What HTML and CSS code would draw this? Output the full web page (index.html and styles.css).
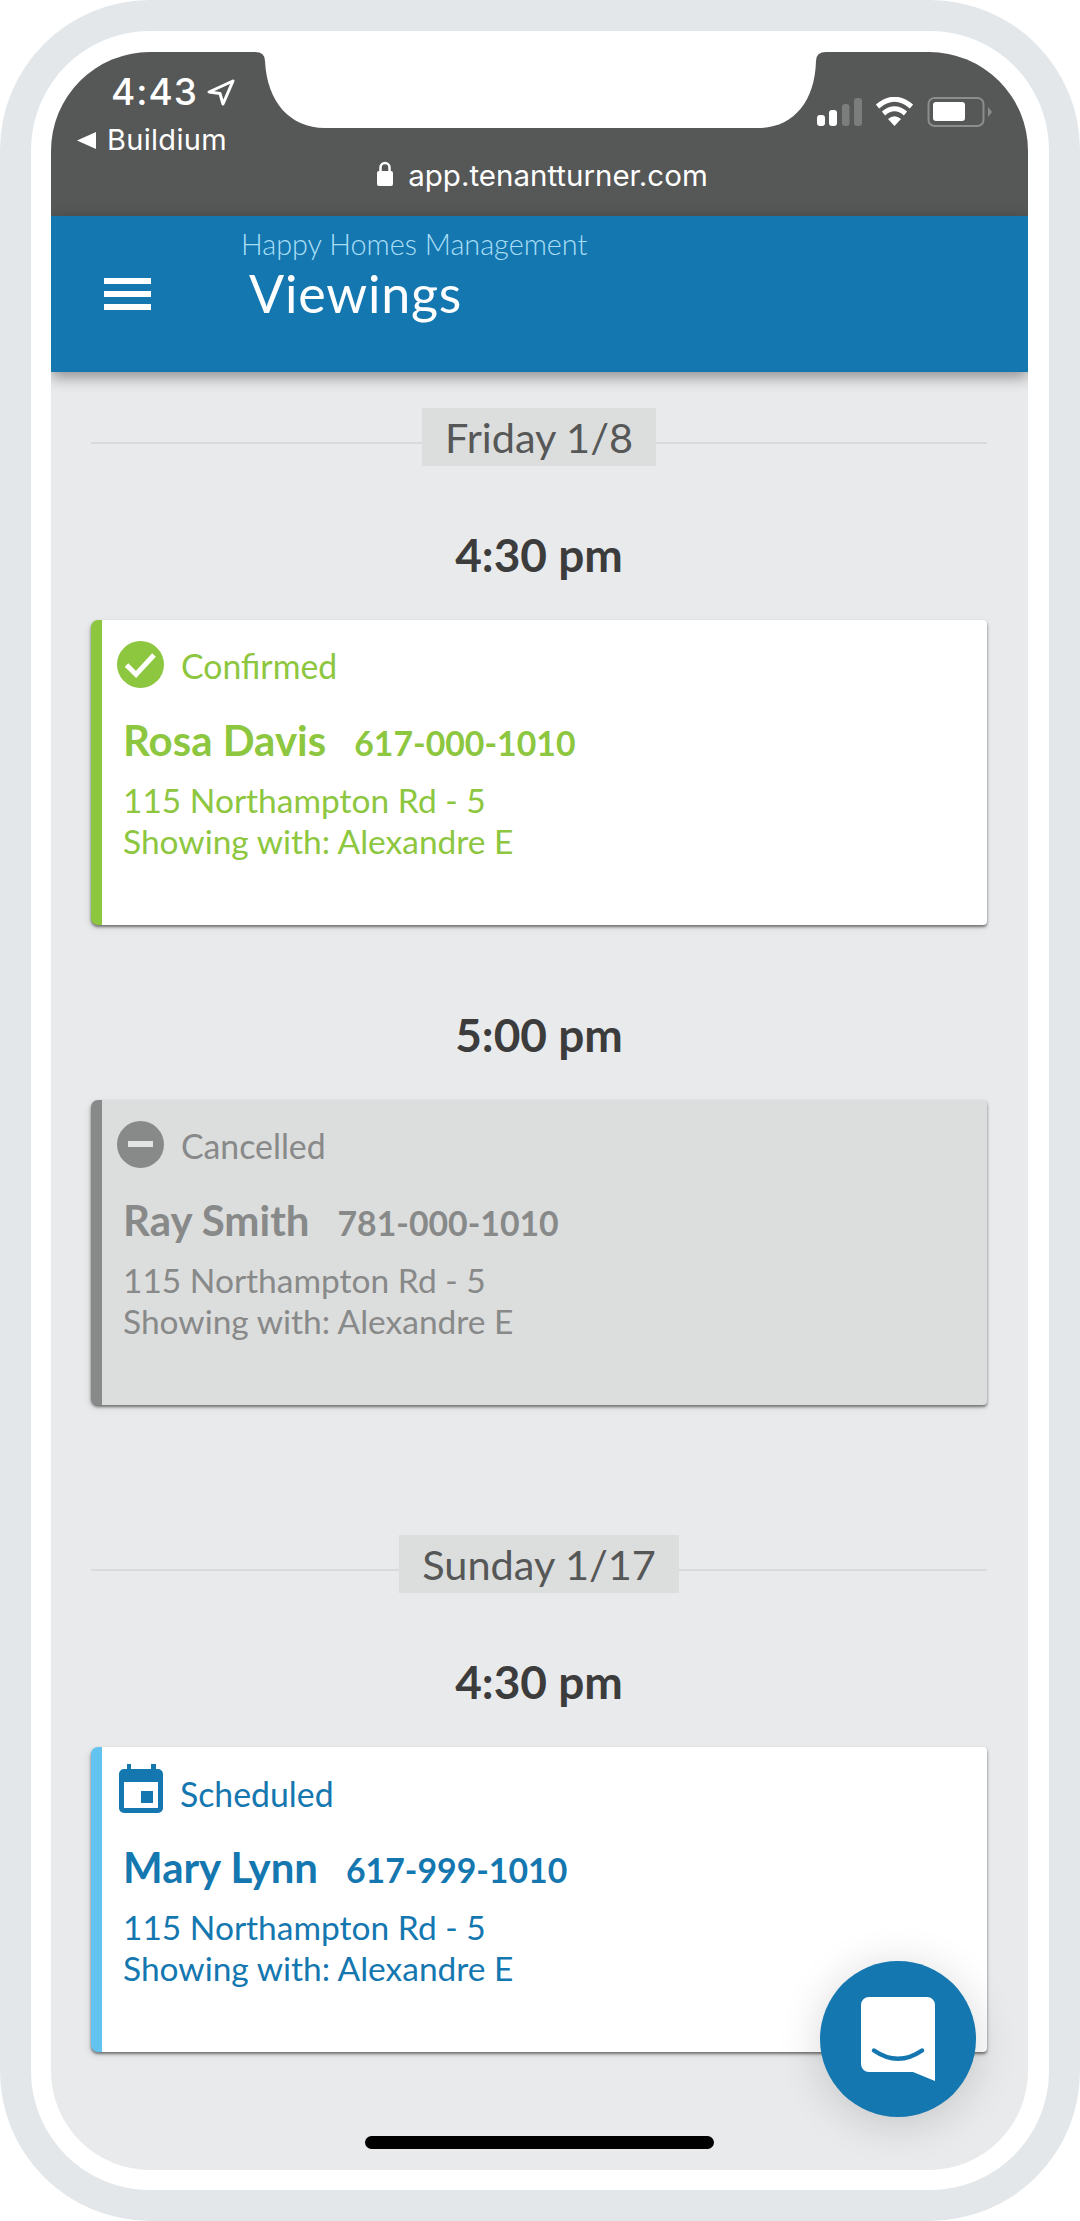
FILE: index.html
```html
<!DOCTYPE html>
<html lang="en">
<head>
<meta charset="utf-8">
<title>Viewings</title>
<link rel="stylesheet" href="styles.css">
</head>
<body>
<div class="frame">
  <div class="bezel">
    <div class="screen">
      <svg class="notch" width="571" height="76" viewBox="0 0 571 76"><path fill="#fff" d="M0 0Q10 0 10 9C12 50 35 76 70 76L503 76C538 76 560 50 561 9Q561 0 571 0Z"/></svg>
      <div class="status">
        <div class="status-top">
          <div class="status-left">
            <div class="clock">
              <span>4:43</span>
              <svg class="loc" width="28" height="27" viewBox="0 0 28 27"><path d="M26 2L2 13L13 14.500L16 25Z" fill="none" stroke="#fff" stroke-width="3" stroke-linejoin="round"/></svg>
            </div>
            <div class="back">
              <svg class="tri" width="19" height="17" viewBox="0 0 19 17"><path d="M19 0V17L0 8.500Z" fill="#fff"/></svg>
              <span>Buildium</span>
            </div>
          </div>
          <svg class="status-icons" width="176" height="31" viewBox="0 0 176 31">
            <rect x="0" y="18" width="8" height="11" rx="3" fill="#fff"/>
            <rect x="12" y="13" width="8" height="16" rx="3" fill="#fff"/>
            <rect x="25" y="7" width="7.500" height="22" rx="3" fill="#7b7c7c"/>
            <rect x="37" y="1" width="8" height="28" rx="3" fill="#7b7c7c"/>
            <path d="M60.500 9.500Q77.500 -5 94.500 9.500M66.500 16.500Q77.500 7 88.500 16.500" fill="none" stroke="#fff" stroke-width="5"/>
            <path d="M71 22Q77.500 16.500 84 22L77.500 29Z" fill="#fff"/>
            <rect x="111.500" y="1" width="55" height="28" rx="6" fill="none" stroke="#8c8d8d" stroke-width="2"/>
            <rect x="116" y="5" width="32" height="19" rx="3" fill="#fff"/>
            <path d="M171 10V20L175 15Z" fill="#8c8d8d"/>
          </svg>
        </div>
        <div class="url">
          <svg class="lock" width="16" height="25" viewBox="0 0 16 25"><path d="M3.500 11V6.500a4.500 4.500 0 0 1 9 0V11" fill="none" stroke="#fff" stroke-width="2.500"/><rect x="0" y="10" width="16" height="15" rx="2" fill="#fff"/></svg>
          <span>app.tenantturner.com</span>
        </div>
      </div>
      <header class="appbar">
        <div class="burger"><i></i><i></i><i></i></div>
        <div class="titles">
          <div class="company">Happy Homes Management</div>
          <h1 class="title">Viewings</h1>
        </div>
      </header>
      <main class="list">
        <div class="date-row"><span class="rule"></span><span class="date">Friday 1/8</span><span class="rule"></span></div>

        <div class="time">4:30 pm</div>
        <article class="card confirmed">
          <div class="state">
            <svg class="state-icon" width="47" height="47" viewBox="0 0 47 47"><circle cx="23.500" cy="23.500" r="23.500" fill="#8dc63f"/><path d="M9.500 24L19 33.500L37 14" fill="none" stroke="#fff" stroke-width="5"/></svg>
            <span>Confirmed</span>
          </div>
          <div class="who"><span class="name">Rosa Davis</span><span class="phone">617-000-1010</span></div>
          <div class="line">115 Northampton Rd - 5</div>
          <div class="line">Showing with: Alexandre E</div>
        </article>

        <div class="time later">5:00 pm</div>
        <article class="card cancelled">
          <div class="state">
            <svg class="state-icon" width="47" height="47" viewBox="0 0 47 47"><circle cx="23.500" cy="23.500" r="23.500" fill="#888989"/><rect x="11" y="20" width="25" height="6" fill="#e4e4e4"/></svg>
            <span>Cancelled</span>
          </div>
          <div class="who"><span class="name">Ray Smith</span><span class="phone">781-000-1010</span></div>
          <div class="line">115 Northampton Rd - 5</div>
          <div class="line">Showing with: Alexandre E</div>
        </article>

        <div class="date-row date-later"><span class="rule"></span><span class="date">Sunday 1/17</span><span class="rule"></span></div>

        <div class="time">4:30 pm</div>
        <article class="card scheduled">
          <div class="state">
            <svg class="state-icon" width="44" height="49" viewBox="0 0 44 49"><path fill="#1477b0" fill-rule="evenodd" d="M8 0h4v5h20V0h5v5h2a5 5 0 0 1 5 5v34a5 5 0 0 1-5 5H5a5 5 0 0 1-5-5V10a5 5 0 0 1 5-5h3ZM5 18v26h34V18ZM22 27h12v12H22Z"/></svg>
            <span>Scheduled</span>
          </div>
          <div class="who"><span class="name">Mary Lynn</span><span class="phone">617-999-1010</span></div>
          <div class="line">115 Northampton Rd - 5</div>
          <div class="line">Showing with: Alexandre E</div>
        </article>
      </main>
      <button class="fab" aria-label="Chat">
        <svg width="74" height="84" viewBox="0 0 74 84"><path fill="#fff" d="M8 0H66a8 8 0 0 1 8 8V84L52 75H8a8 8 0 0 1-8-8V8a8 8 0 0 1 8-8Z"/><path d="M13 53.500Q37 70 61 53.500" fill="none" stroke="#1477b0" stroke-width="4.500" stroke-linecap="round"/></svg>
      </button>
      <div class="home-bar"></div>
    </div>
  </div>
</div>
</body>
</html>
```
FILE: styles.css
```css
* { box-sizing: border-box; }
html, body { margin: 0; padding: 0; background: #fff; }
body { width: 1080px; height: 2221px; overflow: hidden; font-family: "Lato", "Liberation Sans", sans-serif; }

.frame { height: 2221px; padding: 31px; background: #e3e7ea; border-radius: 150px; }
.bezel { height: 100%; padding: 21px 21px 20px 20px; background: #fff; border-radius: 119px; }
.screen { position: relative; height: 100%; overflow: hidden; background: #e9eaeb; border-radius: 99px; }

.notch { position: absolute; left: 204px; top: 0; z-index: 3; }

.status { height: 164px; background: #565757; color: #fff; font-family: "Inter", "Liberation Sans", sans-serif; }
.status-top { display: flex; justify-content: space-between; height: 106px; }
.status-left { padding-top: 20px; }
.clock { display: flex; align-items: flex-start; gap: 9px; padding-left: 60px; font-size: 37px; line-height: 40px; font-weight: 500; letter-spacing: 1px; }
.loc { margin-top: 7px; }
.back { display: flex; align-items: center; margin-top: 12px; padding-left: 26px; font-size: 29px; line-height: 32px; font-weight: 400; letter-spacing: .3px; }
.tri { margin-right: 11px; }
.status-icons { margin: 45px 35px 0 0; }
.url { display: flex; justify-content: center; align-items: center; gap: 15px; padding-left: 6px; font-size: 29.500px; line-height: 34px; }
.lock { margin-top: -3px; }

.appbar { position: relative; z-index: 2; display: flex; height: 156px; background: #1477b0; box-shadow: 0 5px 14px rgba(0, 0, 0, .4); color: #fff; }
.burger { display: flex; flex-direction: column; gap: 7px; width: 47px; margin: 62px 0 0 53px; }
.burger i { display: block; height: 6px; background: #fff; }
.titles { margin-left: 90px; padding-top: 11px; }
.company { font-size: 28.800px; line-height: 34px; font-weight: 300; color: #a9def6; }
.title { margin: 2px 0 0 8px; font-size: 52px; line-height: 60px; font-weight: 400; letter-spacing: .8px; }

.list { padding: 36px 41px 0 40px; }
.date-row { display: flex; align-items: center; }
.date-later { margin-top: 130px; }
.rule { flex: 1; height: 2px; margin-top: 12px; background: #d9dbdb; }
.date { padding: 0 23px; height: 58px; line-height: 58px; font-size: 41.500px; color: #565757; background: #dcdddd; }

.time { margin-top: 62px; margin-bottom: 38px; font-size: 46px; line-height: 54px; font-weight: 700; text-align: center; color: #3c3c3c; }
.time.later { margin-top: 83px; }
.card { height: 305px; padding: 21px 0 0 21px; background: #fff; border-left: 11px solid #000; border-radius: 7px 4px 4px 7px; box-shadow: 0 2px 3px rgba(0, 0, 0, .5), -2px 3px 8px rgba(0, 0, 0, .07); }
.card.confirmed { border-left-color: #8dc63f; color: #8dc63f; }
.card.cancelled { border-left-color: #888989; background: #dcdddd; color: #888989; }
.card.scheduled { border-left-color: #62c3f0; color: #1477b0; }
.state { display: flex; height: 47px; margin-left: -6px; font-size: 33.800px; line-height: 47px; font-weight: 400; }
.state-icon { flex: none; margin-right: 17px; }
.state span { padding-top: 2px; }
.scheduled .state { margin-top: -4px; margin-left: -4px; }
.scheduled .state span { padding-top: 7px; }
.who { display: flex; align-items: baseline; gap: 28px; margin-top: 28px; }
.scheduled .who { margin-top: 32px; }
.name { font-size: 42px; line-height: 48px; font-weight: 700; }
.phone { font-size: 33.800px; font-weight: 700; }
.line { font-size: 33.500px; line-height: 41px; font-weight: 400; }
.who + .line { margin-top: 16px; }

.fab { position: absolute; left: 769px; top: 1909px; z-index: 4; display: flex; align-items: flex-start; justify-content: flex-start; width: 156px; height: 156px; padding: 36px 0 0 41px; border: 0; border-radius: 50%; background: #1477b0; box-shadow: 0 6px 44px rgba(0, 0, 0, .16); }
.home-bar { position: absolute; left: 314px; top: 2084px; z-index: 4; width: 349px; height: 13px; border-radius: 7px; background: #000; }
```
